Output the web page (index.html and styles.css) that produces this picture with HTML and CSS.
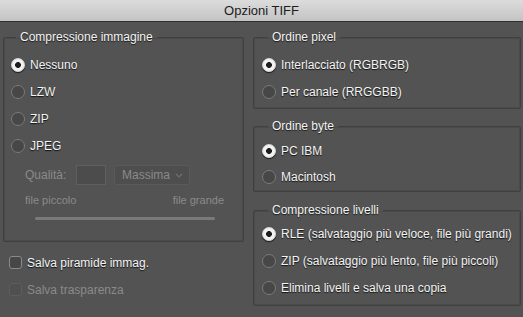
FILE: index.html
```html
<!DOCTYPE html>
<html lang="it">
<head>
  <meta charset="UTF-8">
  <title>Opzioni TIFF</title>
  <link rel="stylesheet" href="styles.css">
</head>
<body>
  <div class="titlebar">Opzioni TIFF</div>

  <div class="dialog">
    <div class="col">
      <fieldset class="box box-image">
        <legend>Compressione immagine</legend>
        <div class="opt"><span class="radio on"></span>Nessuno</div>
        <div class="opt"><span class="radio"></span>LZW</div>
        <div class="opt"><span class="radio"></span>ZIP</div>
        <div class="opt"><span class="radio"></span>JPEG</div>

        <div class="quality">
          <span class="dim qlabel">Qualità:</span>
          <span class="field"></span>
          <span class="select dim">Massima
            <svg width="8" height="5" viewBox="0 0 8 5"><path d="M1 1 L4 4 L7 1" fill="none" stroke="#6e6e6e" stroke-width="1.2"/></svg>
          </span>
        </div>
        <div class="scale dim"><span>file piccolo</span><span>file grande</span></div>
        <div class="slider"></div>
      </fieldset>

      <div class="checks">
        <div class="opt"><span class="check"></span>Salva piramide immag.</div>
        <div class="opt disabled"><span class="check"></span>Salva trasparenza</div>
      </div>
    </div>

    <div class="col">
      <fieldset class="box box-pixel">
        <legend>Ordine pixel</legend>
        <div class="opt"><span class="radio on"></span>Interlacciato (RGBRGB)</div>
        <div class="opt"><span class="radio"></span>Per canale (RRGGBB)</div>
      </fieldset>

      <fieldset class="box box-byte">
        <legend>Ordine byte</legend>
        <div class="opt"><span class="radio on"></span>PC IBM</div>
        <div class="opt"><span class="radio"></span>Macintosh</div>
      </fieldset>

      <fieldset class="box box-layers">
        <legend>Compressione livelli</legend>
        <div class="opt"><span class="radio on"></span>RLE (salvataggio più veloce, file più grandi)</div>
        <div class="opt"><span class="radio"></span>ZIP (salvataggio più lento, file più piccoli)</div>
        <div class="opt"><span class="radio"></span>Elimina livelli e salva una copia</div>
      </fieldset>
    </div>
  </div>
</body>
</html>
```

FILE: styles.css
```css
:root {
  --bg: #535353;
  --line: #404040;
  --text: #f4f4f4;
  --dim: #8a8a8a;
}

* {
  box-sizing: border-box;
}

body {
  margin: 0;
  background: var(--bg);
  color: var(--text);
  font-family: 'Liberation Sans', Arial, sans-serif;
  font-size: 12px;
  height: 317px;
  overflow: hidden;
  white-space: nowrap;
}

.titlebar {
  height: 22px;
  line-height: 21px;
  font-size: 13px;
  text-align: center;
  color: #1c1c1c;
  background: linear-gradient(to bottom, #dcdcdc, #c3c3c3);
  border-bottom: 1px solid #2e2e2e;
}

.dialog {
  display: grid;
  grid-template-columns: 241px 268px;
  gap: 9px;
  padding: 8px 3px 0 3px;
}

.col {
  display: flex;
  flex-direction: column;
}

.box {
  margin: 0;
  padding: 0 7px;
  border: 1px solid var(--line);
  border-radius: 2px;
  box-shadow: inset 0 0 0 1px #4b4b4b;
}

legend {
  line-height: 15px;
  padding: 0 4px;
  margin-left: 5px;
  text-shadow: 0 1px 1px #1a1a1a;
}

.opt {
  display: flex;
  align-items: center;
  height: 27px;
  text-shadow: 0 1px 1px #111;
}

.radio {
  width: 14px;
  height: 14px;
  border-radius: 50%;
  margin-right: 5px;
  background: #474747;
  border: 1px solid #7a7a7a;
  flex-shrink: 0;
}

.radio.on {
  background: radial-gradient(circle, #1d1d1d 0 2.6px, #f2f2f2 3.2px);
  border-color: #d8d8d8;
  box-shadow: 0 1px 1px #1a1a1a;
}

.box-image {
  padding-top: 6px;
  padding-bottom: 21px;
}

.quality {
  display: flex;
  align-items: center;
  margin: 6px 0 0 14px;
  height: 20px;
}

.qlabel {
  width: 51px;
}

.field {
  width: 30px;
  height: 20px;
  background: #4c4c4c;
  border: 1px solid #5f5f5f;
  margin-right: 8px;
}

.select {
  width: 76px;
  height: 20px;
  display: flex;
  align-items: center;
  justify-content: space-between;
  padding: 0 6px 0 7px;
  background: #4e4e4e;
  border: 1px solid #5a5a5a;
  border-radius: 2px;
}

.dim {
  color: var(--dim);
}

.scale {
  display: flex;
  justify-content: space-between;
  margin: 8px 12px 0 14px;
  line-height: 15px;
  font-size: 11px;
}

.slider {
  height: 3px;
  margin: 9px 21px 0 24px;
  background: #7a7a7a;
  border-radius: 2px;
}

.checks {
  margin: 7px 0 0 6px;
}

.check {
  width: 13px;
  height: 13px;
  margin-right: 5px;
  border-radius: 3px;
  background: #474747;
  border: 1px solid #8a8a8a;
  flex-shrink: 0;
}

.opt.disabled {
  color: var(--dim);
  text-shadow: none;
}

.opt.disabled .check {
  background: #505050;
  border-color: #5d5d5d;
}

.box-pixel {
  padding: 6px 8px 3px;
}

.box-pixel legend,
.box-byte legend,
.box-layers legend {
  margin-left: 6px;
}

.box-byte {
  margin-top: 10px;
  padding: 4px 8px 1px;
}

.box-byte .opt {
  height: 26px;
}

.box-layers {
  margin-top: 11px;
  padding: 2px 8px 4px;
}
```
